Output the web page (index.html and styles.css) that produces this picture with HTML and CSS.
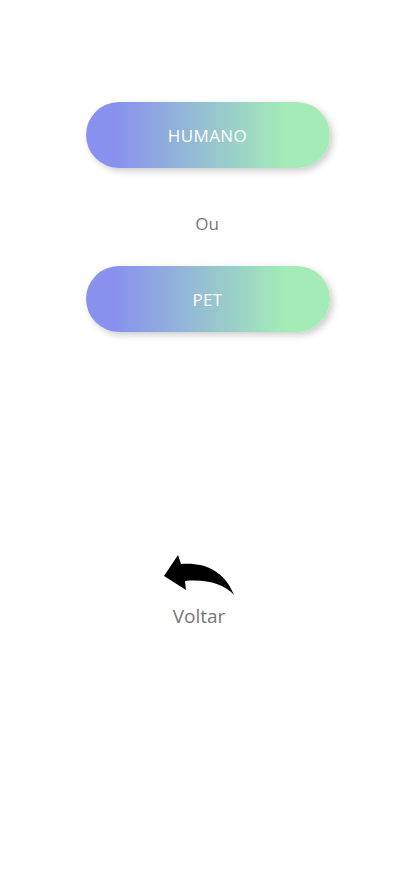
FILE: index.html
```html
<!DOCTYPE html>
<html lang="pt">
<head>
<meta charset="utf-8">
<title>Escolha</title>
<link rel="stylesheet" href="styles.css">
</head>
<body>
<main class="screen">
  <button class="choice" type="button">HUMANO</button>
  <p class="or">Ou</p>
  <button class="choice" type="button">PET</button>
  <a class="back" href="#">
    <svg class="back-icon" width="74" height="44" viewBox="0 0 74 44" aria-hidden="true">
      <path d="M2,23 L16,2 L19,11 C40,9 62,16 72,42 C62,31 45,26 23,28 L24,37 Z" fill="#000"/>
    </svg>
    <span class="back-label">Voltar</span>
  </a>
</main>
</body>
</html>
```
FILE: styles.css
```css
html, body {
  margin: 0;
  padding: 0;
  background: #fff;
}
body {
  font-family: "Open Sans", "Noto Sans", sans-serif;
}
.screen {
  width: 414px;
  min-height: 896px;
  display: flex;
  flex-direction: column;
  align-items: center;
  padding-top: 102px;
  box-sizing: border-box;
}
.choice {
  width: 244px;
  height: 66px;
  border: none;
  border-radius: 33px;
  background: linear-gradient(90deg, #8891ee 12%, #a3ecb7 82%);
  box-shadow: 3px 3px 7px rgba(0, 0, 0, 0.2);
  color: #fff;
  font-family: "Open Sans", "Noto Sans", sans-serif;
  font-size: 17px;
  letter-spacing: 0.4px;
  padding: 0;
  margin-left: 1px;
}
.or {
  margin: 44px 0 31px;
  font-size: 17px;
  line-height: 23px;
  color: #777;
}
.back {
  margin-top: 221px;
  display: flex;
  flex-direction: column;
  align-items: center;
  text-decoration: none;
}
.back-icon {
  display: block;
  margin-left: -16px;
}
.back-label {
  margin-top: 7px;
  font-size: 19px;
  line-height: 24px;
  color: #777;
  margin-left: -16px;
}
```
